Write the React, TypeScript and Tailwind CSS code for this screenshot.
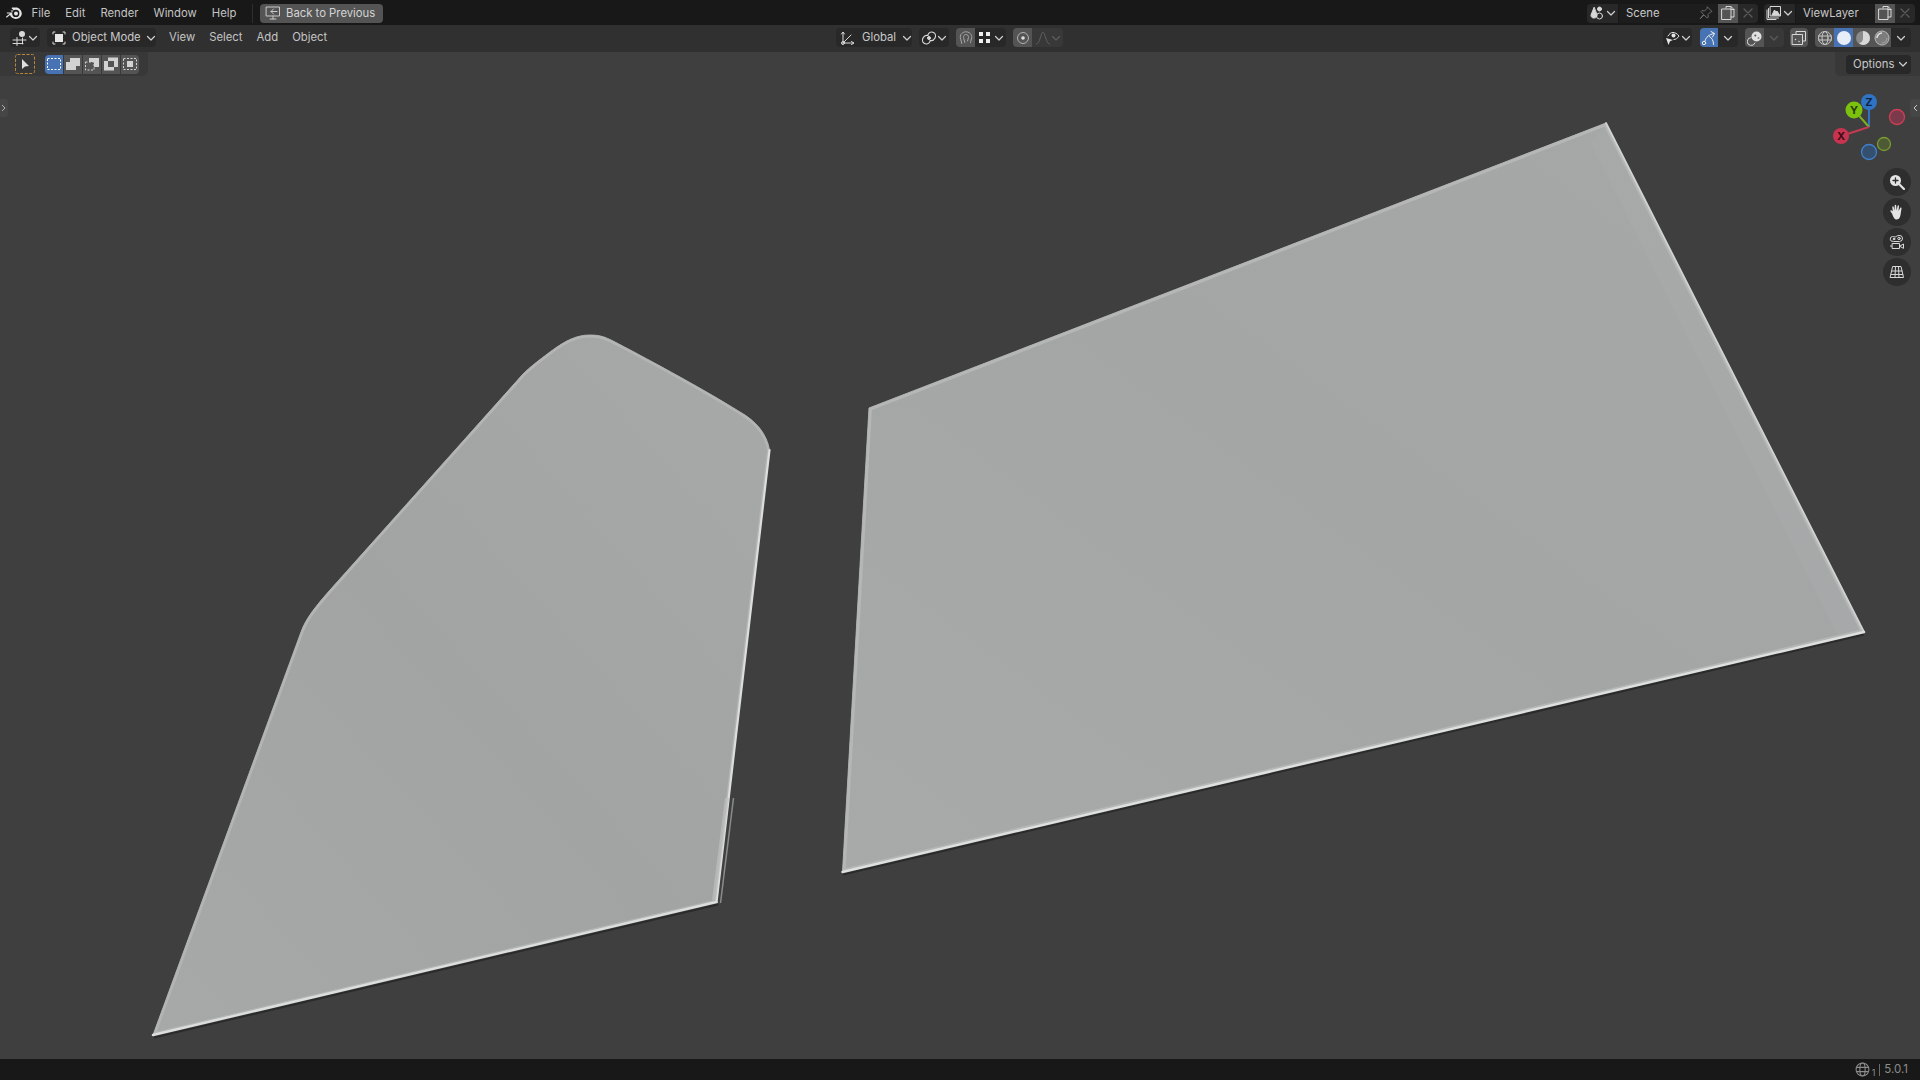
import { ReactNode } from 'react';

// Shared dropdown caret
function Caret({ dim = false }: { dim?: boolean }) {
  return (
    <svg width="10" height="10" viewBox="0 0 10 10" className="shrink-0">
      <path d="M1.5 3.5 5 7l3.5-3.5" fill="none" stroke={dim ? '#5c5c5c' : '#d0d0d0'} strokeWidth="1.2" strokeLinecap="round" strokeLinejoin="round" />
    </svg>
  );
}

function Glyph({ children, size = 16 }: { children: ReactNode; size?: number }) {
  return (
    <svg width={size} height={size} viewBox="0 0 16 16" className="shrink-0" fill="none" stroke="#d8d8d8" strokeWidth="1" strokeLinecap="round" strokeLinejoin="round">
      {children}
    </svg>
  );
}

function BlenderLogo() {
  return (
    <svg width="17" height="14" viewBox="0 0 17 14" className="shrink-0">
      <path d="M6.2 1.6h5c2.8 1.2 4.6 3.5 4.6 6 0 3-2.7 5.4-6 5.4-2.8 0-5.1-1.6-5.8-3.9L1 11.4c-.7.5-1.3-.3-.8-.8L4 7.5H1.2c-.7 0-.7-1 0-1h5.6L4.6 4.7H5l-.5-.1h3.4L5.8 2.6c-.4-.4-.1-1 .4-1z" fill="#e4e4e4" />
      <circle cx="9.8" cy="7.4" r="3.6" fill="#181818" />
      <circle cx="10" cy="7.4" r="2" fill="#e4e4e4" />
    </svg>
  );
}

function MenuItem({ label }: { label: string }) {
  return <span className="px-[7.5px] leading-[19px] text-[#c4c4c4]">{label}</span>;
}

function HeaderMenuItem({ label }: { label: string }) {
  return <span className="px-[7px] leading-[19px] text-[#c4c4c4]">{label}</span>;
}

function SelectModeIcon({ mode }: { mode: number }) {
  return (
    <svg width="16" height="16" viewBox="0 0 16 16">
      {mode === 0 && <rect x="1.5" y="2.5" width="13" height="11" fill="none" stroke="#fff" strokeDasharray="2 1.5" />}
      {mode === 1 && <path d="M1 6h4V2h10v8h-4v4H1z" fill="#d2d2d2" />}
      {mode === 2 && (
        <>
          <rect x="1.5" y="6" width="8.5" height="8" fill="none" stroke="#d2d2d2" strokeDasharray="2 1.5" />
          <path d="M5 2h10v9h-5V6H5z" fill="#d2d2d2" />
        </>
      )}
      {mode === 3 && <path fillRule="evenodd" d="M1 5h4V1.500h10V11h-4v3.500H1zM5 5v6h6V5z" fill="#d2d2d2" />}
      {mode === 4 && (
        <>
          <rect x="1.500" y="2.500" width="13" height="11" fill="none" stroke="#d2d2d2" strokeDasharray="2 1.5" />
          <rect x="5" y="5" width="6" height="6" fill="#d2d2d2" />
        </>
      )}
    </svg>
  );
}

function NavButton({ children }: { children: ReactNode }) {
  return <div className="flex h-[28px] w-[28px] items-center justify-center rounded-full bg-[#2e2e2e]">{children}</div>;
}

function CopyIcon() {
  return (
    <Glyph>
      <path d="M6 3V1.500h5l3 3v7.500h-3M2 4h9v10.500H2zM11 1.500v3h3" />
    </Glyph>
  );
}

function TopBar() {
  return (
    <div className="flex h-[25px] shrink-0 items-center bg-[#181818] pt-px text-[11.3px]">
      <div className="ml-[6px] mr-px"><BlenderLogo /></div>
      <div className="flex w-[228px] items-center">
        <MenuItem label="File" />
        <MenuItem label="Edit" />
        <MenuItem label="Render" />
        <MenuItem label="Window" />
        <MenuItem label="Help" />
      </div>
      <div className="h-[19px] w-px bg-[#2e2e2e]" />
      <div className="ml-[7px] flex h-[19px] w-[123px] items-center gap-[5px] rounded-[4px] bg-[#545454] pl-[5px] text-[#d4d4d4]">
        <Glyph>
          <path d="M1.500 2h13v9h-13zM5 14h6M8 11v3M8.500 4 6 6.500 8.500 9M6 6.500h6" stroke="#c8c8c8" />
        </Glyph>
        Back to Previous
      </div>

      <div className="ml-auto flex h-[19px] w-[171px] items-center">
        <div className="flex h-full w-[31px] items-center justify-center gap-px rounded-l-[4px] bg-[#282828]">
          <Glyph>
            <path d="M5 2.500 2 10c0 2 1 3 3 3s3-1 3-3z" fill="#d8d8d8" />
            <circle cx="10.500" cy="4" r="2" fill="#d8d8d8" />
            <circle cx="10.500" cy="11" r="3" />
          </Glyph>
          <Caret />
        </div>
        <div className="ml-px flex h-full w-[99px] items-center justify-between bg-[#1d1d1d] pl-[7px] pr-[4px] text-[#c8c8c8]">
          Scene
          <Glyph>
            <path d="M9.500 2 14 6.500l-1.500.5-2.500 2.500.3 2.500-1 1L6 10l-4 4 3.500-4.500L3 6.500l1-1 2.500.5L9 3.500z" stroke="#6b6b6b" />
          </Glyph>
        </div>
        <div className="flex h-full w-[20px] items-center justify-center bg-[#545454]"><CopyIcon /></div>
        <div className="flex h-full w-[20px] items-center justify-center rounded-r-[4px] bg-[#282828]">
          <Glyph><path d="m4 4 8 8m0-8-8 8" stroke="#5a5a5a" strokeWidth="1.300" /></Glyph>
        </div>
      </div>

      <div className="ml-[6px] mr-[5px] flex h-[19px] w-[151px] items-center">
        <div className="flex h-full w-[31px] items-center justify-center gap-px rounded-l-[4px] bg-[#282828]">
          <Glyph>
            <rect x="4.500" y="1.500" width="10" height="9.500" />
            <path d="M2.500 3.500v9.500h10M1 5v9.500h9" />
            <path d="m6 10 2.500-5 1.500 2 1-1 2.500 4z" fill="#d8d8d8" />
          </Glyph>
          <Caret />
        </div>
        <div className="ml-px flex h-full w-[79px] items-center bg-[#1d1d1d] pl-[7px] text-[#c8c8c8]">ViewLayer</div>
        <div className="flex h-full w-[20px] items-center justify-center bg-[#545454]"><CopyIcon /></div>
        <div className="flex h-full w-[20px] items-center justify-center rounded-r-[4px] bg-[#282828]">
          <Glyph><path d="m4 4 8 8m0-8-8 8" stroke="#5a5a5a" strokeWidth="1.300" /></Glyph>
        </div>
      </div>
    </div>
  );
}

function HeaderBar() {
  return (
    <div className="flex h-[27px] shrink-0 items-start bg-[#303030] pt-[3px] text-[11.3px] text-[#c8c8c8]">
      {/* left group */}
      <div className="flex w-[836px] shrink-0 items-center pl-[10px]">
        <div className="flex h-[19px] w-[30px] items-center justify-center rounded-[4px] bg-[#282828]">
          <Glyph>
            <circle cx="10" cy="4" r="3" fill="#d8d8d8" stroke="none" />
            <path d="M1 10h13M1 13.500h10M5 7.500v8M10.500 8v6" />
          </Glyph>
          <Caret />
        </div>
        <div className="ml-[7px] flex h-[19px] w-[109px] items-center gap-[5px] rounded-[4px] bg-[#282828] pl-[4px]">
          <Glyph>
            <path d="M4 2H2v2M12 2h2v2M2 12v2h2M14 12v2h-2" stroke="#d8d8d8" />
            <rect x="4" y="4" width="8" height="8" fill="#e6e6e6" stroke="none" />
          </Glyph>
          <span className="flex-1 whitespace-nowrap">Object Mode</span>
          <div className="pr-[2px]"><Caret /></div>
        </div>
        <div className="ml-[6px] flex items-center">
          <HeaderMenuItem label="View" />
          <HeaderMenuItem label="Select" />
          <HeaderMenuItem label="Add" />
          <HeaderMenuItem label="Object" />
        </div>
      </div>

      {/* transform group */}
      <div className="flex items-center">
        <div className="flex h-[19px] w-[76px] items-center gap-[6px] rounded-[4px] bg-[#282828] pl-[4px]">
          <Glyph>
            <path d="M3 13 3 2.500M3 13l10.500 0M3 13 11 5M1.500 4 3 2l1.500 2M11.500 11.500 14 13l-2.500 1.500" />
            <circle cx="3" cy="13" r="1.500" />
          </Glyph>
          <span className="flex-1">Global</span>
          <div className="pr-[2px]"><Caret /></div>
        </div>
        <div className="ml-[7px] flex h-[19px] w-[30px] items-center justify-center rounded-[4px] bg-[#282828]">
          <Glyph>
            <path d="M7 4.500c1-2 3.500-3 5.500-2s2.500 3.500 1.500 5.500-3 3-5 2.500" strokeWidth="1.200" />
            <path d="M9 11.500c-1 2-3.500 3-5.500 2S1 10 2 8s3-3 5-2.500" strokeWidth="1.200" />
            <circle cx="8" cy="8" r="1.500" fill="#d8d8d8" />
          </Glyph>
          <Caret />
        </div>
        <div className="ml-[7px] flex h-[19px] w-[19px] items-center justify-center rounded-l-[4px] bg-[#545454]">
          <Glyph>
            <path d="M3.800 13.500 2.300 7.500C2 4 5 1.800 8 1.800s6 2.200 5.700 5.700l-1.200 5M6.800 12.500 5.500 7.500C5.300 5.500 6.500 4.500 8 4.500s2.700 1 2.500 3L9.500 11" stroke="#a8a8a8" strokeDasharray="4 .8" />
          </Glyph>
        </div>
        <div className="flex h-[19px] w-[31px] items-center justify-center gap-[3px] rounded-r-[4px] bg-[#282828]">
          <svg width="13" height="13" viewBox="0 0 13 13">
            <path d="M1 1h4v4H1zM8 1h4v4H8zM1 8h4v4H1zM8 8h4v4H8z" fill="#f0f0f0" />
          </svg>
          <Caret />
        </div>
        <div className="ml-[7px] flex h-[19px] w-[19px] items-center justify-center rounded-l-[4px] bg-[#545454]">
          <Glyph>
            <circle cx="8" cy="8" r="5.500" stroke="#b0b0b0" />
            <circle cx="8" cy="8" r="1.800" fill="#e0e0e0" stroke="none" />
          </Glyph>
        </div>
        <div className="flex h-[19px] w-[31px] items-center justify-center rounded-r-[4px] bg-[#383838]">
          <Glyph><path d="M1.500 14C5 14 6 2 8 2s3 12 6.500 12" stroke="#5e5e5e" /></Glyph>
          <Caret dim />
        </div>
      </div>

      {/* right group */}
      <div className="ml-auto mr-[9px] flex items-center">
        <div className="flex h-[19px] w-[29px] items-center justify-center rounded-[4px] bg-[#282828]">
          <Glyph>
            <path d="M3 6c1.500-2.500 3-3.500 5-3.500S12 3.500 14 6c-1.500 2.500-3.500 3.500-5 3.500" stroke="#e6e6e6" />
            <circle cx="8.500" cy="5.500" r="2" fill="#e6e6e6" stroke="none" />
            <path d="m1 8 7 2-3 1.200L3.500 15z" fill="#e6e6e6" stroke="none" />
          </Glyph>
          <Caret />
        </div>
        <div className="ml-[8px] flex h-[19px] w-[18px] items-center justify-center rounded-l-[4px] bg-[#4772b3]">
          <Glyph>
            <path d="M4 11C5 7 8 4.500 13 3.500M10 1.500l3.500 2-2 3.500" stroke="#f0f0f0" />
            <circle cx="3" cy="13" r="1.700" stroke="#f0f0f0" />
            <path d="M8.500 6.500c2.500 1.500 4 4 4 8" stroke="#f0f0f0" />
          </Glyph>
        </div>
        <div className="flex h-[19px] w-[20px] items-center justify-center rounded-r-[4px] bg-[#282828]"><Caret /></div>
        <div className="ml-[7px] flex h-[19px] w-[19px] items-center justify-center rounded-l-[4px] bg-[#545454]">
          <Glyph>
            <path d="M4 7.500a4 4 0 1 0 4 5.500" />
            <circle cx="9.500" cy="6.500" r="5" fill="#e0e0e0" stroke="none" />
            <circle cx="8.300" cy="5.500" r="1" fill="#545454" stroke="none" />
            <circle cx="11.500" cy="8" r="1" fill="#8a8a8a" stroke="none" />
          </Glyph>
        </div>
        <div className="flex h-[19px] w-[20px] items-center justify-center rounded-r-[4px] bg-[#383838]"><Caret dim /></div>
        <div className="ml-[6px] flex h-[19px] w-[18px] items-center justify-center rounded-[4px] bg-[#545454]">
          <Glyph>
            <rect x="1.500" y="4.500" width="10" height="10" fill="#545454" />
            <path d="M5 4.500v-3h9.500v9.500h-3" />
            <path d="M4.500 9.500h.01M8 11.500h.01" strokeWidth="1.500" />
          </Glyph>
        </div>
        <div className="ml-[7px] flex h-[19px] w-[19px] items-center justify-center rounded-l-[4px] bg-[#545454]">
          <Glyph>
            <circle cx="8" cy="8" r="6.500" stroke="#c8c8c8" />
            <ellipse cx="8" cy="8" rx="3" ry="6.500" stroke="#c8c8c8" />
            <path d="M1.500 6h13M1.500 10h13" stroke="#c8c8c8" />
          </Glyph>
        </div>
        <div className="flex h-[19px] w-[19px] items-center justify-center bg-[#4772b3]">
          <svg width="16" height="16" viewBox="0 0 16 16"><circle cx="8" cy="8" r="7" fill="#e8eef8" /></svg>
        </div>
        <div className="flex h-[19px] w-[19px] items-center justify-center bg-[#545454]">
          <svg width="16" height="16" viewBox="0 0 16 16">
            <circle cx="8" cy="8" r="7" fill="#8a8a8a" />
            <path d="M8 1a7 7 0 0 1 0 14 6 6 0 0 1-4-2c3 0 4-3 4-5z" fill="#d8d8d8" />
          </svg>
        </div>
        <div className="flex h-[19px] w-[19px] items-center justify-center bg-[#545454]">
          <svg width="16" height="16" viewBox="0 0 16 16">
            <circle cx="8" cy="8" r="7" fill="#7c7c7c" stroke="#b8b8b8" />
            <path d="M3 8a5 5 0 0 1 5-5" stroke="#e4e4e4" strokeWidth="1.500" fill="none" />
            <path d="M13 8a5 5 0 0 1-5 5" stroke="#a8a8a8" fill="none" />
          </svg>
        </div>
        <div className="flex h-[19px] w-[20px] items-center justify-center rounded-r-[4px] bg-[#282828]"><Caret /></div>
      </div>
    </div>
  );
}

function ToolRow() {
  return (
    <div className="relative flex h-[24px] items-center justify-between">
      <div className="flex h-[24px] items-center rounded-br-[5px] bg-[#383838] pl-[15px] pr-[9px]">
        <svg width="20" height="20" viewBox="0 0 20 20">
          <rect x="0.500" y="0.500" width="19" height="19" rx="2" fill="#363636" stroke="#b8883c" strokeDasharray="3 1.500" />
          <path d="M7 5v10l3-2.500 4-.5z" fill="#e0e0e0" />
        </svg>
        <div className="ml-[10px] flex h-[19px] overflow-hidden rounded-[4px]">
          <div className="flex w-[18px] items-center justify-center bg-[#4772b3]"><SelectModeIcon mode={0} /></div>
          <div className="ml-px flex w-[18px] items-center justify-center bg-[#545454]"><SelectModeIcon mode={1} /></div>
          <div className="ml-px flex w-[18px] items-center justify-center bg-[#545454]"><SelectModeIcon mode={2} /></div>
          <div className="ml-px flex w-[18px] items-center justify-center bg-[#545454]"><SelectModeIcon mode={3} /></div>
          <div className="ml-px flex w-[18px] items-center justify-center bg-[#545454]"><SelectModeIcon mode={4} /></div>
        </div>
      </div>
      <div className="flex h-[24px] items-center rounded-bl-[5px] bg-[#383838] pl-[11px] pr-[9px]">
        <div className="flex h-[19px] w-[65px] items-center justify-between rounded-[4px] bg-[#282828] pl-[7px] pr-[3px] text-[11.3px] text-[#c8c8c8]">
          Options
          <Caret />
        </div>
      </div>
    </div>
  );
}

const LEFT_SHAPE =
  'M153 1035 L716.500 902 L769.500 450 C767 434 756 421 740 412 C700 387 640 355 613 341 C605 337 600 335 590 335 C577 335 566 340 550 352 C538 361 530 367 523 374 L330 590 C316 606 306 618 301 632 Z';
const RIGHT_SHAPE = 'M869 408 L1606 123 L1864 632 L842.500 872 Z';

function Meshes() {
  return (
    <svg viewBox="0 52 1920 1007" className="absolute inset-0 h-full w-full">
      <defs>
        <linearGradient id="meshA" x1="0" y1="1" x2="1" y2="0">
          <stop offset="0" stopColor="#a7a8a8" />
          <stop offset="0.5" stopColor="#a2a4a4" />
          <stop offset="1" stopColor="#a7a8a8" />
        </linearGradient>
        <linearGradient id="meshB" x1="0" y1="1" x2="1" y2="0">
          <stop offset="0" stopColor="#a8a9a9" />
          <stop offset="0.5" stopColor="#a4a6a6" />
          <stop offset="1" stopColor="#a6a7a7" />
        </linearGradient>
        <clipPath id="clipA"><path d={LEFT_SHAPE} /></clipPath>
        <clipPath id="clipB"><path d={RIGHT_SHAPE} /></clipPath>
        <filter id="soft" x="-5%" y="-5%" width="110%" height="110%">
          <feGaussianBlur stdDeviation="0.7" />
        </filter>
      </defs>

      {/* left shape */}
      <g filter="url(#soft)">
        <path d="M154 1037.500 L718 904.500" stroke="#2c2c2c" strokeWidth="2" fill="none" />
        <path d={LEFT_SHAPE} fill="url(#meshA)" stroke="#a8aaaa" strokeWidth="1" strokeLinejoin="round" />
        <path d={LEFT_SHAPE} fill="none" stroke="#b3b5b5" strokeWidth="5" clipPath="url(#clipA)" />
        <path d="M153 1035 L716.500 902" stroke="#dcdede" strokeWidth="2.500" strokeLinecap="round" fill="none" />
        <path d="M716.500 902 L769.500 450" stroke="#dcdede" strokeWidth="2.200" strokeLinecap="round" fill="none" />
        <path d="M733.500 798 L720.500 903" stroke="#8a8c8c" strokeWidth="1.500" fill="none" />
        <path d="M727 798 L714 900" stroke="#bdbfbf" strokeWidth="4" fill="none" opacity="0.7" />
      </g>

      {/* right shape */}
      <g filter="url(#soft)">
        <path d="M843 874.500 L1864 634.500" stroke="#2c2c2c" strokeWidth="2" fill="none" />
        <path d={RIGHT_SHAPE} fill="url(#meshB)" stroke="#a8aaaa" strokeWidth="1" strokeLinejoin="round" />
        <path d="M1606 123 L1864 632 L1838 636 L1590 143 Z" fill="#adafaf" opacity="0.35" />
        <path d={RIGHT_SHAPE} fill="none" stroke="#b5b7b7" strokeWidth="6" clipPath="url(#clipB)" />
        <path d="M1606 123 L1864 632" stroke="#d0d2d2" strokeWidth="1.800" strokeLinecap="round" fill="none" />
        <path d="M842.500 872 L1864 632" stroke="#dee0e0" strokeWidth="2.500" strokeLinecap="round" fill="none" />
      </g>
    </svg>
  );
}

function NavGizmo() {
  return (
    <div className="absolute right-[9px] top-[39px] flex w-[70px] flex-col items-end">
      <svg width="70" height="70" viewBox="1841 91 70 70" className="overflow-visible">
        <circle cx="1897" cy="117" r="7.500" fill="#7a3a4c" stroke="#d03d55" strokeWidth="1.300" />
        <circle cx="1884" cy="144" r="6.500" fill="#4d5a35" stroke="#7b9b30" strokeWidth="1.300" />
        <circle cx="1869" cy="152" r="7.500" fill="#35506f" stroke="#3f80cc" strokeWidth="1.300" />
        <path d="M1869 127V102" stroke="#2f74c4" strokeWidth="2" />
        <path d="M1869 127 1854 110" stroke="#7ab020" strokeWidth="2" />
        <path d="M1869 127 1841 136" stroke="#c43a52" strokeWidth="2" />
        <circle cx="1869" cy="102" r="8" fill="#2f74c4" />
        <circle cx="1854" cy="110" r="8.500" fill="#7cc10e" />
        <circle cx="1841" cy="136" r="8" fill="#c8334f" />
        <text x="1869" y="106" textAnchor="middle" fontSize="11" fontWeight="700" fill="#10233c" fontFamily="Inter, sans-serif">Z</text>
        <text x="1854" y="114" textAnchor="middle" fontSize="11" fontWeight="700" fill="#233a06" fontFamily="Inter, sans-serif">Y</text>
        <text x="1841" y="140" textAnchor="middle" fontSize="11" fontWeight="700" fill="#3c0d17" fontFamily="Inter, sans-serif">X</text>
      </svg>
      <div className="mt-[7px] flex flex-col gap-[2px]">
        <NavButton>
          <Glyph>
            <circle cx="6.500" cy="6.500" r="5.500" fill="#e4e4e4" stroke="none" />
            <path d="M10.500 10.500 15 15" stroke="#e4e4e4" strokeWidth="2.200" />
            <path d="M4 6.500h5M6.500 4v5" stroke="#2e2e2e" strokeWidth="1.300" />
          </Glyph>
        </NavButton>
        <NavButton>
          <svg width="16" height="16" viewBox="0 0 16 16">
            <path d="M3 9.500C2 8 1 7 1.500 6.500S3 6.500 3.800 7.500L3.300 3c0-1 1.200-1 1.400 0L5.500 6.500 5.700 1.500c0-1 1.400-1 1.500 0L7.500 6.500 8.600 2c.2-1 1.500-.8 1.400.2L9.500 7l1.700-3c.5-.8 1.600-.3 1.300.5L11.500 11c-.5 3-2 4.500-4 4.500-2 0-3-2-4.500-6z" fill="#e4e4e4" />
          </svg>
        </NavButton>
        <NavButton>
          <Glyph>
            <path d="M4 7.500a2.500 2.500 0 0 1-.5-5c1 0 1.500.5 2.500.5s2-1.500 4-1.500a3 3 0 0 1 1 6z" />
            <circle cx="5" cy="5" r=".8" fill="#d8d8d8" />
            <circle cx="10" cy="4.500" r="1.200" />
            <rect x="3.500" y="9.500" width="7" height="5" />
            <path d="M11 12 14.500 10v4z" />
            <path d="M1.500 12h1" />
          </Glyph>
        </NavButton>
        <NavButton>
          <Glyph>
            <path d="M4 2.500h8l2.500 11H1.500zM3 7h10M2.200 10.500h11.600M6.500 2.500 6 13.500M9.500 2.500l.5 11" />
          </Glyph>
        </NavButton>
      </div>
    </div>
  );
}

function Viewport() {
  return (
    <div className="relative min-h-0 flex-1 bg-[#3f3f3f]">
      <Meshes />
      <ToolRow />
      {/* region tabs */}
      <div className="absolute left-0 top-[47px] flex h-[18px] w-[8px] items-center justify-center rounded-r-[3px] bg-[#464646]">
        <svg width="6" height="8" viewBox="0 0 6 8"><path d="m1 1 3 3-3 3" fill="none" stroke="#b0b0b0" strokeWidth="1" /></svg>
      </div>
      <div className="absolute right-0 top-[47px] flex h-[18px] w-[10px] items-center justify-center rounded-l-[3px] bg-[#464646]">
        <svg width="6" height="8" viewBox="0 0 6 8"><path d="M5 1 2 4l3 3" fill="none" stroke="#c8c8c8" strokeWidth="1" /></svg>
      </div>
      <NavGizmo />
    </div>
  );
}

function StatusBar() {
  return (
    <div className="flex h-[21px] shrink-0 items-center justify-end gap-[2px] bg-[#181818] pr-[12px] text-[11.5px] text-[#8c8c8c]">
      <svg width="15" height="15" viewBox="0 0 14 14" fill="none" stroke="#8c8c8c" strokeWidth="1">
        <circle cx="7" cy="7" r="6" />
        <ellipse cx="7" cy="7" rx="2.500" ry="6" />
        <path d="M1.500 5h11M1.500 9h11" />
      </svg>
      <span className="mt-[6px] text-[9px] leading-none">1</span>
      <span className="mx-[2px] h-[12px] w-px bg-[#6c6c6c]" />
      <span>5.0.1</span>
    </div>
  );
}

export default function App() {
  return (
    <div className="flex h-screen w-full flex-col overflow-hidden font-['Inter',sans-serif]">
      <TopBar />
      <HeaderBar />
      <Viewport />
      <StatusBar />
    </div>
  );
}
